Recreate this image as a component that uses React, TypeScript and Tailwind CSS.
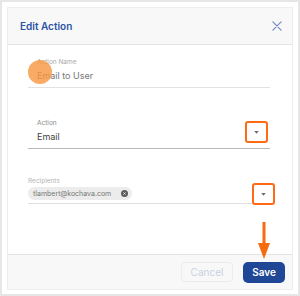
import React from "react";

const font = { fontFamily: "Inter, 'Noto Sans', sans-serif" };

const Caret: React.FC = () => (
  <svg width="5" height="3" viewBox="0 0 6 4" className="text-[#6b6b6b]">
    <path d="M0 0h6L3 3.5z" fill="currentColor" />
  </svg>
);

const App: React.FC = () => {
  return (
    <div
      className="relative w-[300px] h-[296px] bg-white border-2 border-[#e6e6e6] pt-[5px] px-[5px] pb-[4px] overflow-hidden"
      style={font}
    >
      <div className="flex flex-col h-full border border-[#eeeeee] bg-white">
        <div className="h-[37px] shrink-0 flex items-center justify-between pl-[12px] pr-[10px] bg-[#f8f8f8] border-b border-[#e4e4e4]">
          <span className="text-[10px] font-semibold text-[#2b52a3]">Edit Action</span>
          <svg width="10" height="10" viewBox="0 0 11 11" className="text-[#7189bd]">
            <path d="M1 1l9 9M10 1l-9 9" stroke="currentColor" strokeWidth="1.3" strokeLinecap="round" />
          </svg>
        </div>

        <div className="flex-1 flex flex-col px-[20px]">
          <div className="mt-[13px] w-[242px] border-b border-[#e2e2e2] pb-[3px]">
            <div className="pl-[9px] text-[6.5px] leading-[8px] text-[#a8a8a8]">Action Name</div>
            <div className="pl-[9px] mt-[2px] text-[9px] leading-[16px] text-[#777777]">Email to User</div>
          </div>

          <div className="mt-[31px] w-[242px] border-b border-[#b8b8b8] pb-[3px]">
            <div className="pl-[9px] text-[6.5px] leading-[8px] text-[#8a8a8a]">Action</div>
            <div className="pl-[9px] mt-[2px] text-[9px] leading-[16px] text-[#3f3f3f]">Email</div>
          </div>

          <div className="mt-[28px] w-[224px] border-b border-[#e0e0e0] pb-[3px]">
            <div className="text-[6.5px] leading-[8px] text-[#b3b3b3]">Recipients</div>
            <div className="mt-[2px] flex">
              <div className="h-[13px] w-[104px] flex items-center justify-between rounded-full bg-[#ececec] pl-[5px] pr-[4px]">
                <span className="text-[7px] leading-[13px] text-[#777777]">tlambert@kochava.com</span>
                <span className="w-[7px] h-[7px] rounded-full bg-[#5c5c5c] flex items-center justify-center">
                  <svg width="3" height="3" viewBox="0 0 4 4">
                    <path d="M0.5 0.5l3 3M3.5 0.5l-3 3" stroke="white" strokeWidth="1" />
                  </svg>
                </span>
              </div>
            </div>
          </div>
        </div>

        <div className="h-[35px] shrink-0 flex items-center justify-end gap-[10px] pr-[7px] bg-[#f8f8f8] border-t border-[#e4e4e4]">
          <button className="w-[52px] h-[20px] rounded-[4px] border border-[#ececec] text-[10px] text-[#c9d2e3]">
            Cancel
          </button>
          <button className="w-[42px] h-[21px] rounded-[5px] bg-[#1f4796] text-[10px] font-semibold text-white">
            Save
          </button>
        </div>
      </div>

      {/* annotation overlays */}
      <div className="absolute left-[26px] top-[58px] w-[24px] h-[24px] rounded-full bg-[#f7963f]/80" />
      <div className="absolute left-[243px] top-[119px] w-[23px] h-[22px] rounded-[3px] border-[2.5px] border-[#ff6a14] flex items-center justify-center">
        <Caret />
      </div>
      <div className="absolute left-[250px] top-[181px] w-[23px] h-[22px] rounded-[3px] border-[2.5px] border-[#ff6a14] flex items-center justify-center">
        <Caret />
      </div>
      <svg className="absolute left-[255px] top-[220px]" width="14" height="38" viewBox="0 0 14 38">
        <path d="M7 0v24" stroke="#f76b10" strokeWidth="3" />
        <path d="M1 21h12L7 37z" fill="#f76b10" />
      </svg>
    </div>
  );
};

export default App;
